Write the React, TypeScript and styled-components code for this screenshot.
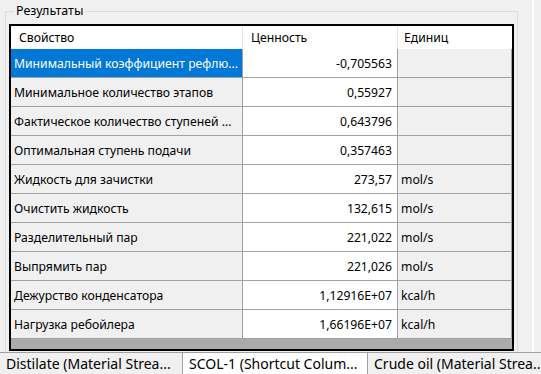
import React from 'react';
import styled, {createGlobalStyle} from 'styled-components';

const GlobalStyle = createGlobalStyle`
    html, body {
        margin: 0;
        padding: 0;
        background: #f0f0f0;
    }
    body {
        font-family: "Noto Sans", "Open Sans", sans-serif;
        font-size: 12.2px;
        color: #000;
    }
`;

type Row = {
    name: string;
    value: string;
    unit?: string;
};

// names as the grid shows them (clipped by the control)
const rows: Row[] = [
    {name: 'Минимальный коэффициент рефлю...', value: '-0,705563'},
    {name: 'Минимальное количество этапов', value: '0,55927'},
    {name: 'Фактическое количество ступеней ...', value: '0,643796'},
    {name: 'Оптимальная ступень подачи', value: '0,357463'},
    {name: 'Жидкость для зачистки', value: '273,57', unit: 'mol/s'},
    {name: 'Очистить жидкость', value: '132,615', unit: 'mol/s'},
    {name: 'Разделительный пар', value: '221,022', unit: 'mol/s'},
    {name: 'Выпрямить пар', value: '221,026', unit: 'mol/s'},
    {name: 'Дежурство конденсатора', value: '1,12916E+07', unit: 'kcal/h'},
    {name: 'Нагрузка ребойлера', value: '1,66196E+07', unit: 'kcal/h'},
];

const tabs = [
    'Distilate (Material Strea...',
    'SCOL-1 (Shortcut Colum...',
    'Crude oil (Material Strea..',
];

const Window = styled.div`
    width: 541px;
    height: 374px;
    display: flex;
    flex-direction: column;
    overflow: hidden;
`;

const Main = styled.div`
    height: 353px;
    display: flex;
    overflow: hidden;
`;

const LeftPane = styled.div`
    width: 532px;
    padding-left: 5px;
    box-sizing: border-box;
`;

const Splitter = styled.div`
    width: 2px;
    background: #fcfcfc;
`;

const GroupBox = styled.fieldset`
    width: 513px;
    box-sizing: border-box;
    margin: 3px 0 0 0;
    padding: 5px 3px 0 3px;
    border: 1px solid #dcdcdc;
    height: 400px;
`;

const GroupTitle = styled.legend`
    padding: 0 2px;
    margin-left: 5px;
    line-height: 16px;
    font-size: 12.5px;
    color: #000;
`;

const Grid = styled.div`
    border: 2px solid #000;
    background: #ababab;
    height: 323px;
    box-sizing: content-box;
    display: grid;
    grid-template-columns: 232px 155px 114px;
    grid-auto-rows: 29px;
    grid-template-rows: 23px;
    align-content: start;
`;

const HeadCell = styled.div<{ $pad: number }>`
    background: #fff;
    border-right: 1px solid #e5e5e5;
    padding-left: ${(p) => p.$pad}px;
    display: flex;
    align-items: center;
    white-space: nowrap;
    &:nth-child(3) {
        border-right: none;
    }
`;

const Cell = styled.div<{ $bg: string; $color?: string; $right?: boolean }>`
    background: ${(p) => p.$bg};
    color: ${(p) => p.$color || '#000'};
    border-right: 1px solid #a0a0a0;
    border-bottom: 1px solid #a0a0a0;
    display: flex;
    align-items: center;
    justify-content: ${(p) => (p.$right ? 'flex-end' : 'flex-start')};
    padding: ${(p) => (p.$right ? '0 5px 0 0' : '0 2px 0 3px')};
    min-width: 0;
    overflow: hidden;
    white-space: nowrap;
`;

const TabStrip = styled.div`
    height: 21px;
    border-top: 1px solid #a0a0a0;
    display: flex;
`;

const Tab = styled.div<{ $active?: boolean }>`
    flex: 0 0 auto;
    width: ${(p) => (p.$active ? '186px' : '182px')};
    box-sizing: border-box;
    background: ${(p) => (p.$active ? '#fff' : 'transparent')};
    border-left: ${(p) => (p.$active ? '1px solid #a0a0a0' : 'none')};
    border-right: ${(p) => (p.$active ? '1px solid #a0a0a0' : 'none')};
    padding: 0 6px;
    display: flex;
    align-items: center;
    font-size: 14px;
    white-space: nowrap;
    overflow: hidden;
`;

const App = () => {
    return (
        <Window>
            <GlobalStyle/>
            <Main>
                <LeftPane>
                    <GroupBox>
                        <GroupTitle>Результаты</GroupTitle>
                        <Grid>
                            <HeadCell $pad={8}>Свойство</HeadCell>
                            <HeadCell $pad={8}>Ценность</HeadCell>
                            <HeadCell $pad={6}>Единиц</HeadCell>
                            {rows.map((r, i) => (
                                <React.Fragment key={i}>
                                    <Cell $bg={i === 0 ? '#0078d7' : '#f0f0f0'} $color={i === 0 ? '#fff' : '#000'}>
                                        {r.name}
                                    </Cell>
                                    <Cell $bg="#fff" $right>
                                        {r.value}
                                    </Cell>
                                    <Cell $bg="#f0f0f0">
                                        {r.unit || ''}
                                    </Cell>
                                </React.Fragment>
                            ))}
                        </Grid>
                    </GroupBox>
                </LeftPane>
                <Splitter/>
            </Main>
            <TabStrip>
                {tabs.map((t, i) => (
                    <Tab key={i} $active={i === 1}>
                        {t}
                    </Tab>
                ))}
            </TabStrip>
        </Window>
    );
};

export default App;
